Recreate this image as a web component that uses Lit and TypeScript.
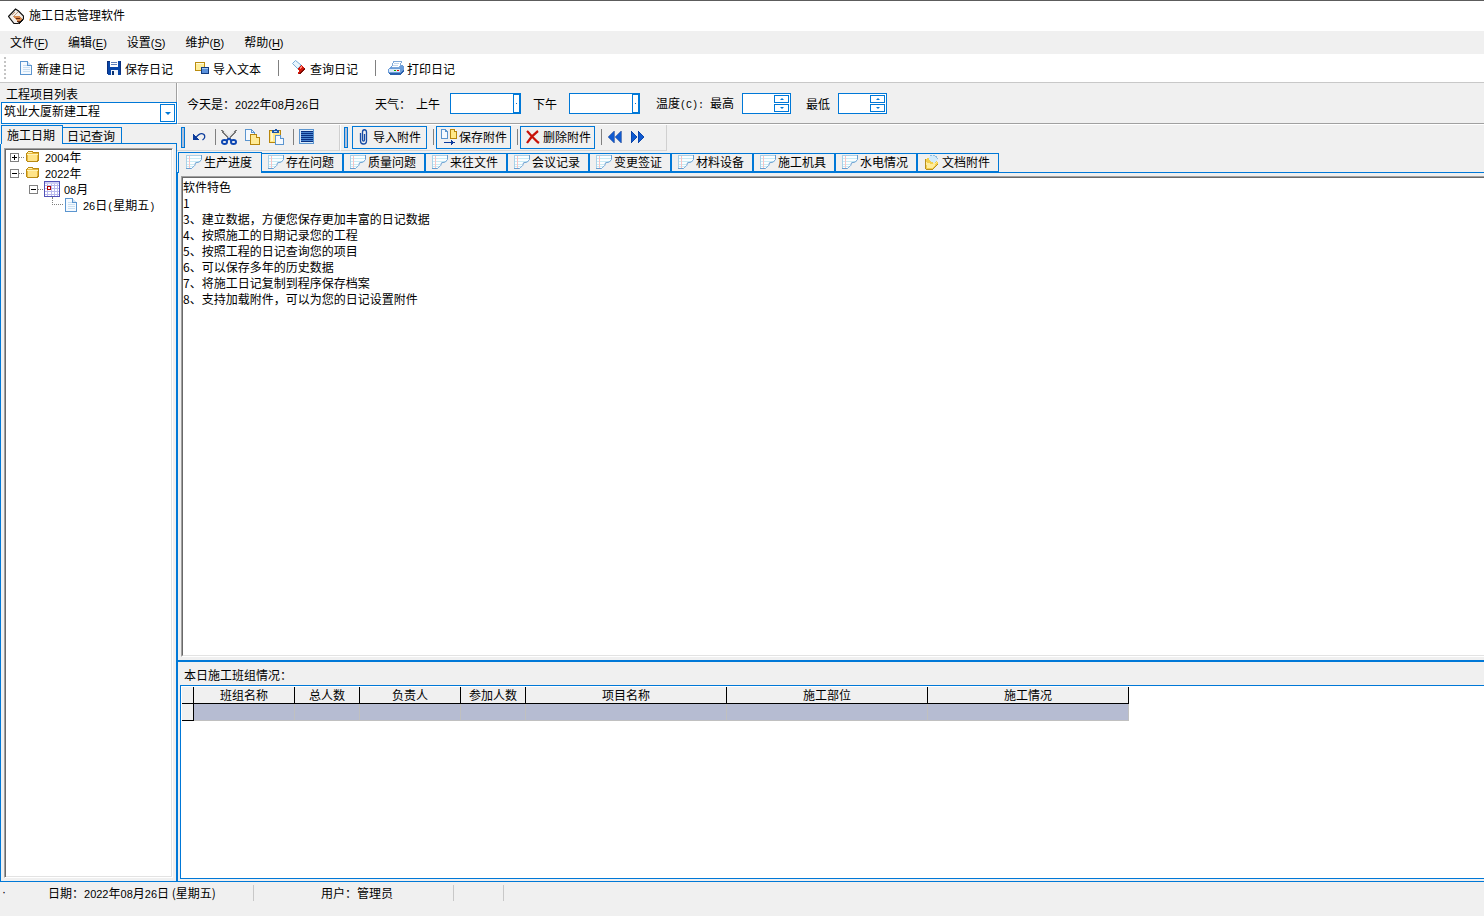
import { LitElement, html, svg, css } from "lit";
import { customElement, state } from "lit/decorators.js";
import { classMap } from "lit/directives/class-map.js";

const box = (w: number, h: number, body: unknown) =>
  html`<svg class="ico" width=${w} height=${h} viewBox="0 0 ${w} ${h}" shape-rendering="crispEdges" aria-hidden="true">${body}</svg>`;

// Half-width runs: digits in a sans face, punctuation in a mono face.
const mix = (s: string) =>
  (s.match(/[0-9]+|[ -~]+|[^ -~]+/g) ?? []).map((p) =>
    /^[0-9]/.test(p) ? html`<span class="num">${p}</span>` : /^[ -~]/.test(p) ? html`<span class="punct">${p}</span>` : p
  );

const icons = {
  app: () => box(16, 16, svg`
    <path d="M.5 8.500L7.500 1l3 2 5 5v3L10 15.500H6z" fill="#f3eeea" stroke="#111" stroke-width="1.200" shape-rendering="auto"/>
    <path d="M4 7l3-3M5 9l5-5" stroke="#c09878"/>
    <path d="M6 8h5l3 2-1 4-4-1-2-2z" fill="#d68a50"/><path d="M8 10h4v1H8zM9 13h3v1H9z" fill="#6a2c12"/>
    <path d="M12 13l3-2v1l-4 4z" fill="#111"/>`),
  page: () => box(16, 16, svg`
    <path d="M2.500 1.500h7l4 4v9h-11z" fill="#f5faff" stroke="#5b95cf"/>
    <path d="M9.500 1.500v4h4" fill="#cfe2f5" stroke="#5b95cf"/>
    <path d="M5 5.500h4M5 7.500h7M5 9.500h7M5 11.500h7" stroke="#c9dff2"/>`),
  save: () => box(16, 16, svg`
    <path d="M1 1h14v14H2l-1-1z" fill="#0846a8"/><path d="M1 1h3v1H2v12H1zM14 1h1v13h-1z" fill="#0b2f7c"/>
    <path d="M4 1h8v6H4z" fill="#fff"/><path d="M5 2.500h6M5 4.500h6" stroke="#5f7fb8"/>
    <path d="M5 10h7v5H5z" fill="#eef3fb"/><path d="M6 11h2v4H6z" fill="#08306f"/>`),
  importText: () => box(16, 16, svg`
    <path d="M1.500 2.500h9v8h-9z" fill="#ffee9a" stroke="#bb8d10"/><path d="M2 3h8v1H2z" fill="#fffbe0"/>
    <path d="M7.500 7.500h7v6h-7z" fill="#5b92dc" stroke="#123c80"/><path d="M8 8h6v1H8z" fill="#a9cbf2"/>`),
  torch: () => box(16, 16, svg`
    <path d="M1.500 3.500l3-3L10 5l-3 4z" fill="#eaf5fc" stroke="#79add8" shape-rendering="auto"/>
    <path d="M6 9l4-4 4 3v2l-5 4H7l1-3z" fill="#d3180c"/>
    <path d="M8 8l2-2 1 1-2 2z" fill="#ff8d7e"/><path d="M8 13l5-5 1 1v1l-5 4H8z" fill="#7c0b04"/>`),
  printer: () => box(16, 16, svg`
    <path d="M5.500 1.500h8l-2 6h-8z" fill="#fff" stroke="#7fa9d8"/><path d="M6 3.500h5M5 5.500h5" stroke="#c3d7ec"/>
    <path d="M0 9l3-3h1v2h8l1-3h2l1 2v4l-4 4H2l-2-2z" fill="#6a9cd9"/><path d="M1 9h11v3H1z" fill="#dbe9f8"/>
    <path d="M6 10h2v1H6z" fill="#0a0"/><path d="M9 10h2v1H9z" fill="#e00"/>
    <path d="M1 13h11l4-4v2l-4 4H2z" fill="#2a60ab"/>`),
  undo: () => box(16, 16, svg`
    <path d="M2 5v6h6z" fill="#0c3c9c"/>
    <path d="M5 8.500C8 4.500 11 4 13 5.500c1.500 2 .8 4-1.500 5.500" fill="none" stroke="#0c3c9c" stroke-width="1.300" shape-rendering="auto"/>`),
  cut: () => box(16, 16, svg`
    <path d="M1 1l8 9M15 1l-8 9" stroke="#777" stroke-width="2.600"/><path d="M2 1l7 8M14 1l-7 8" stroke="#e4e4e4" stroke-width="1.200"/>
    <g fill="none" stroke="#0b45b2" stroke-width="1.800" shape-rendering="auto"><ellipse cx="3.500" cy="13" rx="2.600" ry="2"/><ellipse cx="12.500" cy="13" rx="2.600" ry="2"/><path d="M5 12l3-2.500 3 2.500"/></g>`),
  copy: () => box(16, 16, svg`
    <path d="M.5.5h6l3 3v8h-9z" fill="#f4f9ff" stroke="#5b95cf"/><path d="M6.500.5v3h3" fill="none" stroke="#5b95cf"/>
    <path d="M5.500 5.500h6l3 3v7h-9z" fill="#ffeb96" stroke="#b8860b"/><path d="M11.500 5.500v3h3" fill="#fff6cc" stroke="#b8860b"/>`),
  paste: () => box(16, 16, svg`
    <path d="M.5 1.500h11v12H.5z" fill="#ffe98a" stroke="#b8860b"/><path d="M2 3h2v9H2z" fill="#fff7cf"/>
    <path d="M3 1h2l1-1h1l1 1h2v3H3z" fill="#1c57a5"/><path d="M5 2h3v1H5z" fill="#bcd7f3"/>
    <path d="M6.500 6.500h5l3 3v6h-8z" fill="#f4f9ff" stroke="#5b95cf"/><path d="M11.500 6.500v3h3" fill="#d6e7f7" stroke="#5b95cf"/>`),
  lines: () => box(16, 16, svg`
    <path d="M.5.500h14v14H.5z" fill="#d9ebfb" stroke="#5b95cf"/><path d="M2 2h12v11H2z" fill="#4a86d0"/>
    <path d="M2 2.500h12M2 4.500h12M2 6.500h12M2 8.500h12M2 10.500h12M2 12.500h12" stroke="#082f80"/>`),
  clip: () => box(12, 16, svg`
    <path d="M2.500 4v8c0 4 6 4 6 0V3c0-3-4-3-4 0v8c0 1.500 2 1.500 2 0V5" fill="none" stroke="#164aa5" stroke-width="1.300" shape-rendering="auto"/>`),
  saveClip: () => box(17, 16, svg`
    <path d="M.5.5h4l2 2v7h-6z" fill="#f4f9ff" stroke="#5b95cf"/><path d="M4.500.5v2h2" fill="none" stroke="#5b95cf"/>
    <path d="M9.500.5h4l2 2v7h-6z" fill="#ffe98a" stroke="#b8860b"/><path d="M13.500.5v2h2" fill="#fff" stroke="#b8860b"/>
    <path d="M3 13.500h9" stroke="#0b3a9c"/><path d="M10 11l4 2.500-4 2.500z" fill="#0b3a9c"/>`),
  cross: () => box(16, 16, svg`
    <path d="M2 2c3 3 8 9 12 12M13 2C9 5 5 9 2 14" fill="none" stroke="#c81208" stroke-width="2.200" shape-rendering="auto"/>`),
  rewind: () => box(16, 12, svg`<path d="M7 0v12L1 6zM14 0v12L8 6z" fill="#0f5ad0" stroke="#0a3a96" stroke-width=".6"/>`),
  forward: () => box(16, 12, svg`<path d="M1 0v12l6-6zM8 0v12l6-6z" fill="#0f5ad0" stroke="#0a3a96" stroke-width=".6"/>`),
  note: () => box(16, 14, svg`
    <path d="M0 0h16v5l-1 2-2 1h-3l-1 1v2l-2 3H0z" fill="#fbfeff"/>
    <path d="M0 .5h15M.5 0v13" stroke="#a9d0e8"/>
    <path d="M1 3.500h14M1 6.500h13M1 9.500h7M1 11.500h6" stroke="#c9ebf5"/><path d="M3.500 1v12" stroke="#f6c4c4"/>
    <path d="M15.500 0v4.500l-2 2.500-4 .8-.8 2.700-3 3H0" fill="none" stroke="#6a9fd0" shape-rendering="auto"/>`),
  docs: () => box(16, 16, svg`
    <path d="M1 5l4-1 2 2 6-1 1 5-5 5H2z" fill="#f3cf4c"/>
    <path d="M1 5l1 10h7l5-5" fill="none" stroke="#b98f1c"/>
    <path d="M6 1h5l3 4-4 4-5-3z" fill="#d2ebfa"/><path d="M6 1h5l3 4" fill="none" stroke="#8fbcdd" stroke-dasharray="2 1"/>
    <path d="M2 8l5 2 6-2-4 6H3z" fill="#ffec9c"/>`),
  folder: () => box(16, 14, svg`
    <path d="M1.500 3.500l2-2h4l1 1h5v8h-1v1h-10l-1-1z" fill="#e9b93c" stroke="#b98a12"/>
    <path d="M3 5h9v6H3z" fill="#ffe488"/><path d="M3 2.500h4M2 4.500h11" stroke="#fff3b8"/>`),
  calendar: () => box(16, 16, svg`
    <path d="M.5.5h15v15H.5z" fill="#fff" stroke="#5252b8"/><path d="M1 1h14v2H1z" fill="#cfcff4"/>
    <path d="M1 4.500h14M1 7.500h14M1 10.500h14M1 13.500h14M3.500 3v12M7.500 3v12M10.500 3v12M13.500 3v12" stroke="#b9b9ee"/>
    <path d="M3.500 5.500h3v3h-3z" fill="#fff" stroke="#b00000"/>`),
};

const MENUS = [["文件", "F"], ["编辑", "E"], ["设置", "S"], ["维护", "B"], ["帮助", "H"]];
const TABS = ["生产进度", "存在问题", "质量问题", "来往文件", "会议记录", "变更签证", "材料设备", "施工机具", "水电情况", "文档附件"];
const COLUMNS = [
  { name: "班组名称", cls: "c101" }, { name: "总人数", cls: "c65" }, { name: "负责人", cls: "c101" },
  { name: "参加人数", cls: "c65" }, { name: "项目名称", cls: "c201" }, { name: "施工部位", cls: "c201" }, { name: "施工情况", cls: "c201" },
];
const NOTES = `软件特色
1
3、建立数据，方便您保存更加丰富的日记数据
4、按照施工的日期记录您的工程
5、按照工程的日记查询您的项目
6、可以保存多年的历史数据
7、将施工日记复制到程序保存档案
8、支持加载附件，可以为您的日记设置附件`;

@customElement("app-root")
export class AppRoot extends LitElement {
  @state() private tab = 0;
  @state() private sideTab = 0;

  static styles = css`
    :host {
      --blue: #0078d7;
      --face: #f0f0f0;
      display: flex; flex-direction: column; height: 100vh; overflow: hidden; background: #fff; color: #000;
      font: 12px/16px "Noto Sans CJK SC", sans-serif;
    }
    *, *::before, *::after { box-sizing: border-box; }
    button, input, select, textarea { font: inherit; color: inherit; margin: 0; padding: 0; border: 0; border-radius: 0; background: none; outline: none; }
    button { white-space: nowrap; }
    ul { list-style: none; margin: 0; padding: 0; }
    .ico { display: block; flex: none; }
    .num { font: 11px/16px "Liberation Sans", sans-serif; }
    .punct { font: 10px/16px "Liberation Mono", monospace; white-space: pre; }

    .title { display: flex; align-items: center; gap: 5px; height: 31px; padding-left: 8px; border-top: 1px solid #5c5c5c; }
    .title h1 { font: inherit; margin: 0; padding-bottom: 2px; }
    .menu { display: flex; gap: 20px; height: 23px; padding: 0 10px; background: var(--face); }
    .menu u { text-underline-offset: 2px; }
    .tools { display: flex; align-items: center; height: 29px; padding-left: 4px; border-bottom: 1px solid #c8c8c8; }
    .dots { width: 2px; height: 22px; margin-right: 12px; background: repeating-linear-gradient(#c4c4c4 0 2px, #fff 2px 4px); }
    .tool { display: flex; align-items: center; gap: 3px; margin-right: 21px; }
    .tool span { padding-top: 2px; }
    .tool.last { margin-right: 17px; }
    .rule { width: 1px; height: 16px; margin-right: 12px; background: #808080; }

    .main { display: flex; flex: 1; min-height: 0; background: var(--face); }
    .side { display: flex; flex-direction: column; width: 177px; flex: none; }
    .side-label { height: 19px; padding: 3px 0 0 6px; border-right: 1px solid #a0a0a0; line-height: 16px; }
    .drop { display: flex; position: relative; background: #fff; border: 1px solid var(--blue); }
    .drop select { appearance: none; flex: 1; min-width: 0; }
    .project { height: 22px; margin-left: 1px; }
    .project select { padding-left: 2px; padding-bottom: 4px; }
    .arrow { position: absolute; right: 1px; top: 1px; bottom: 1px; width: 15px; border: 1px solid var(--blue); display: grid; place-items: center; pointer-events: none; background: #fff; }
    .arrow::after { content: ""; border: solid transparent; border-width: 3px 3px 0; border-top-color: var(--blue); }
    .side-tabs { display: flex; align-items: flex-end; height: 19px; margin-top: 1px; padding-left: 1px; }
    .side-tab { width: 60px; height: 17px; padding-right: 2px; border: 1px solid var(--blue); line-height: 15px; }
    .side-tab.on { width: 62px; height: 19px; border-bottom: 0; line-height: 18px; margin-right: -1px; background: var(--face); }
    .side-page { position: relative; display: flex; flex: 1; min-height: 0; border: solid var(--blue); border-width: 0 1px 1px; padding: 4px 3px 3px; }
    .side-line { height: 1px; margin: -1px 0 0 62px; background: var(--blue); }
    .sunken { border: 1px solid; border-color: #a0a0a0 #fff #fff #a0a0a0; }
    .tree { flex: 1; background: #fff; }
    .tree-in { height: 100%; padding-left: 5px; box-shadow: inset 1px 1px #696969, inset -1px -1px #e3e3e3; }
    .node { display: flex; align-items: center; height: 16px; }
    .node > span:last-child { height: 16px; line-height: 16px; }
    .exp { width: 9px; height: 9px; border: 1px solid #808080; background: linear-gradient(#000, #000) center/5px 1px no-repeat #fff; }
    .exp.plus { background: linear-gradient(#000, #000) center/5px 1px no-repeat, linear-gradient(#000, #000) center/1px 5px no-repeat #fff; }
    .dash { height: 1px; width: 6px; background: repeating-linear-gradient(90deg, #808080 0 1px, #fff 1px 2px); }
    .elbow { width: 11px; height: 8px; margin-bottom: 8px; border: dotted #808080; border-width: 0 0 1px 1px; }
    .node .ico { margin-right: 4px; }
    .month { padding-left: 19px; }
    .day { padding-left: 42px; }

    .work { display: flex; flex-direction: column; flex: 1; min-width: 0; }
    .weather { display: flex; align-items: center; height: 41px; padding-left: 9px; border-left: 1px solid #fff; border-bottom: 1px solid #a0a0a0; white-space: nowrap; }
    .weather > span, .weather label { padding-top: 2px; }
    .weather .today { width: 188px; }
    .weather label { margin-right: 8px; }
    .weather .am { margin-left: 5px; margin-right: 10px; }
    .weather .pm { margin-right: 12px; }
    .weather .drop { width: 71px; height: 21px; margin-right: 12px; }
    .weather .drop.second { margin-right: 16px; }
    .drop i { width: 7px; border: 1px solid var(--blue); display: grid; place-items: center; }
    .drop i::after { content: ""; width: 1px; height: 1px; background: var(--blue); }
    .spin { display: flex; width: 49px; height: 21px; margin-right: 15px; border: 1px solid var(--blue); background: #fff; }
    .spin input { flex: 1; min-width: 0; }
    .spin div { display: flex; flex-direction: column; gap: 1px; padding: 1px 1px 1px 0; }
    .spin button { width: 15px; height: 8px; border: 1px solid var(--blue); display: grid; place-items: center; }
    .spin button::after { content: ""; border: solid transparent; border-width: 0 2px 2px; border-bottom-color: var(--blue); }
    .spin button + button::after { border-width: 2px 2px 0; border-top-color: var(--blue); }

    .bars { display: flex; height: 27px; border-top: 1px solid #fff; }
    .band { display: flex; align-items: center; padding: 0 0 1px 4px; border-bottom: 1px solid #d6d6d6; border-right: 1px solid #d0d0d0; }
    .band.edit { width: 163px; }
    .band.attach { width: 327px; border-left: 1px solid #fff; padding-left: 3px; }
    .grip { width: 4px; height: 21px; flex: none; background: #b0bfd8; border: 1px solid var(--blue); }
    .edit .grip { margin-right: 6px; }
    .attach .grip { margin-right: 4px; }
    .vr { width: 1px; height: 16px; background: #808080; flex: none; }
    .edit button { margin-right: 8px; }
    .edit .vr { margin-right: 5px; }
    .framed { display: flex; align-items: center; width: 75px; height: 23px; border: 1px solid var(--blue); }
    .b1 { padding-left: 5px; gap: 3px; }
    .b2 { padding-left: 4px; gap: 1px; }
    .b3 { padding-left: 4px; gap: 2px; }
    .attach .vr { margin: 0 2px 0 6px; }
    .nav { margin-left: 3px; margin-right: 4px; }

    .tabs { display: flex; align-items: flex-end; height: 21px; padding-left: 1px; border-bottom: 1px solid var(--blue); margin-top: 1px; }
    .tab { display: flex; align-items: center; gap: 2px; width: 82px; height: 19px; padding-left: 6px; padding-bottom: 1px; border: 1px solid var(--blue); flex: none; position: relative; }
    .tab.on { width: 84px; height: 21px; padding-left: 7px; padding-bottom: 3px; border-bottom: 0; margin-bottom: -1px; margin-right: -1px; background: var(--face); z-index: 1; }
    .tab.on:not(:first-child) { margin-left: -1px; }
    .page { display: flex; flex-direction: column; flex: 1; min-height: 0; border-left: 1px solid var(--blue); border-bottom: 1px solid var(--blue); }
    .editor { flex: 1; min-height: 0; display: flex; margin: 3px 0 3px 3px; border: solid; border-width: 1px 0 1px 1px; border-color: #a0a0a0 #fff #fff #a0a0a0; }
    .editor textarea { flex: 1; resize: none; background: #fff; border: solid; border-width: 1px 0 1px 1px; border-color: #696969 #e3e3e3 #e3e3e3 #696969; padding: 1px 0 0; }
    .team { display: flex; flex-direction: column; flex: 0 0 221px; border-top: 2px solid var(--blue); padding: 0 0 2px 2px; }
    .team h2 { font: inherit; margin: 0; height: 23px; padding: 5px 0 0 4px; }
    .sheet { flex: 1; background: #fff; border: solid var(--blue); border-width: 1px 0 1px 1px; padding: 1px; }
    table { border-collapse: separate; border-spacing: 0; table-layout: fixed; width: 947px; }
    th { height: 17px; padding: 0; font-weight: normal; line-height: 16px; background: var(--face); border: solid #000; border-width: 0 1px 1px 0; }
    td { height: 17px; padding: 0; background: #b6bcd2; border: solid #c0c0c0; border-width: 0 1px 1px 0; }
    td.mark { background: var(--face); border-color: #000; }
    .c12 { width: 12px; } .c65 { width: 65px; } .c101 { width: 101px; } .c201 { width: 201px; }

    .status { display: flex; height: 34px; padding-top: 3px; background: var(--face); }
    .status span.cell { display: block; height: 16px; border-right: 1px solid #c8c8c8; white-space: nowrap; }
    .s0 { width: 48px; padding-left: 2px; font: 12px/14px "Liberation Sans", sans-serif; }
    .status .s1 { width: 206px; }
    .status .s2 { width: 200px; padding-left: 67px; }
    .status .s3 { width: 50px; }
  `;

  private sideTabs() {
    return ["施工日期", "日记查询"].map((n, i) => html`<button role="tab" aria-selected=${this.sideTab === i}
      class=${classMap({ "side-tab": true, on: this.sideTab === i })} @click=${() => (this.sideTab = i)}>${n}</button>`);
  }

  private spin(id: string, text: unknown) {
    return html`<label for=${id}>${text}</label><div class="spin"><input id=${id} type="text" inputmode="numeric">
      <div><button aria-label="增加"></button><button aria-label="减少"></button></div></div>`;
  }

  render() {
    return html`
      <header class="title">${icons.app()}<h1>施工日志管理软件</h1></header>
      <nav class="menu">${MENUS.map(([n, k]) => html`<button>${n}<span class="num">(<u>${k}</u>)</span></button>`)}</nav>
      <div class="tools" role="toolbar">
        <span class="dots"></span>
        <button class="tool">${icons.page()}<span>新建日记</span></button>
        <button class="tool">${icons.save()}<span>保存日记</span></button>
        <button class="tool last">${icons.importText()}<span>导入文本</span></button>
        <span class="rule"></span>
        <button class="tool last">${icons.torch()}<span>查询日记</span></button>
        <span class="rule"></span>
        <button class="tool">${icons.printer()}<span>打印日记</span></button>
      </div>
      <div class="main">
        <aside class="side">
          <label class="side-label" for="project">工程项目列表</label>
          <div class="drop project"><select id="project"><option>筑业大厦新建工程</option></select><span class="arrow"></span></div>
          <div class="side-tabs" role="tablist">${this.sideTabs()}</div>
          <div class="side-line"></div>
          <div class="side-page"><div class="tree sunken"><ul class="tree-in">
            <li class="node"><button class="exp plus" aria-label="展开"></button><span class="dash"></span>${icons.folder()}<span>${mix("2004年")}</span></li>
            <li class="node"><button class="exp" aria-label="折叠"></button><span class="dash"></span>${icons.folder()}<span>${mix("2022年")}</span></li>
            <li class="node month"><button class="exp" aria-label="折叠"></button><span class="dash"></span>${icons.calendar()}<span>${mix("08月")}</span></li>
            <li class="node day"><span class="elbow"></span>${icons.page()}<span>${mix("26日(星期五)")}</span></li>
          </ul></div></div>
        </aside>
        <main class="work">
          <div class="weather">
            <span class="today">今天是：${mix("2022年08月26日")}</span>
            <span>天气：</span>
            <label class="am" for="am">上午</label><div class="drop"><select id="am"></select><i></i></div>
            <label class="pm" for="pm">下午</label><div class="drop second"><select id="pm"></select><i></i></div>
            ${this.spin("high", mix("温度(C): 最高"))}
            ${this.spin("low", "最低")}
          </div>
          <div class="bars">
            <div class="band edit" role="toolbar">
              <span class="grip"></span>
              <button aria-label="撤销">${icons.undo()}</button><span class="vr"></span>
              <button aria-label="剪切">${icons.cut()}</button>
              <button aria-label="复制">${icons.copy()}</button>
              <button aria-label="粘贴">${icons.paste()}</button><span class="vr"></span>
              <button aria-label="全选">${icons.lines()}</button>
            </div>
            <div class="band attach" role="toolbar">
              <span class="grip"></span>
              <button class="framed b1">${icons.clip()}导入附件</button><span class="vr"></span>
              <button class="framed b2">${icons.saveClip()}保存附件</button><span class="vr"></span>
              <button class="framed b3">${icons.cross()}删除附件</button><span class="vr"></span>
              <button class="nav" aria-label="上一条">${icons.rewind()}</button>
              <button class="nav" aria-label="下一条">${icons.forward()}</button>
            </div>
          </div>
          <div class="tabs" role="tablist">
            ${TABS.map((n, i) => html`<button role="tab" aria-selected=${this.tab === i}
              class=${classMap({ tab: true, on: this.tab === i })} @click=${() => (this.tab = i)}>
              ${i === TABS.length - 1 ? icons.docs() : icons.note()}${n}</button>`)}
          </div>
          <div class="page">
            <div class="editor"><textarea aria-label="日记内容" spellcheck="false" .value=${NOTES}></textarea></div>
            <section class="team">
              <h2>本日施工班组情况：</h2>
              <div class="sheet"><table>
                <thead><tr><th class="c12"></th>${COLUMNS.map((c) => html`<th class=${c.cls}>${c.name}</th>`)}</tr></thead>
                <tbody><tr><td class="mark"></td>${COLUMNS.map(() => html`<td></td>`)}</tr></tbody>
              </table></div>
            </section>
          </div>
        </main>
      </div>
      <footer class="status">
        <span class="s0">·</span>
        <span class="cell s1">日期：${mix("2022年08月26日")} (星期五)</span>
        <span class="cell s2">用户：管理员</span>
        <span class="cell s3"></span>
      </footer>
    `;
  }
}
